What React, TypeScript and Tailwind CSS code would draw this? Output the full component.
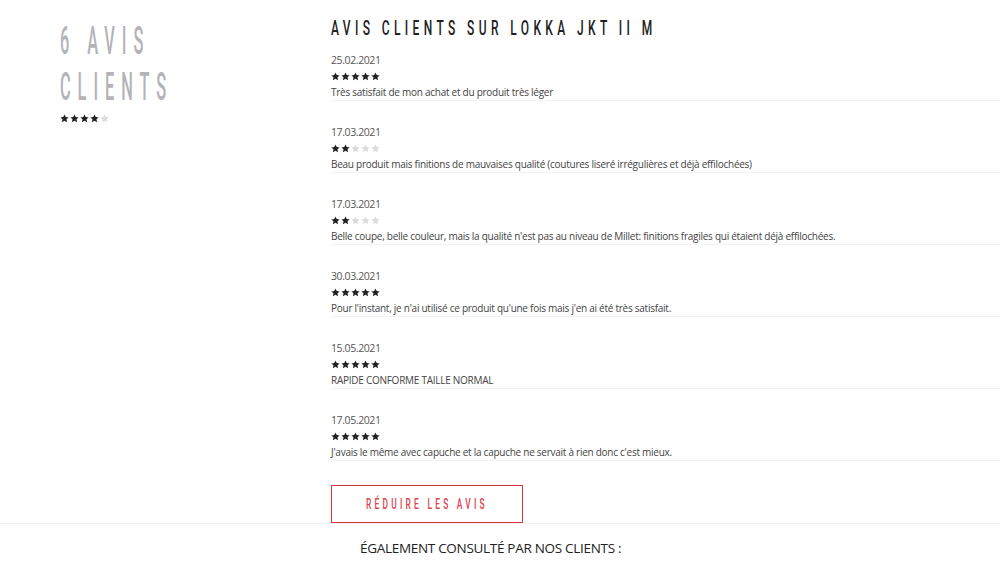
import React from "react";

const Star = ({ on }: { on: boolean }) => (
  <svg width="9" height="9" viewBox="0 0 24 24" className={on ? "text-[#222]" : "text-[#dcdcdc]"}>
    <path fill="currentColor" d="M12 1l3.3 7.1 7.7.9-5.7 5.2 1.6 7.7L12 18 5.1 21.9l1.6-7.7L1 9l7.7-.9z" />
  </svg>
);

const Stars = ({ n }: { n: number }) => (
  <div className="flex items-center gap-[1px] h-[16px]">
    {[0, 1, 2, 3, 4].map((i) => (
      <Star key={i} on={i < n} />
    ))}
  </div>
);

const reviews = [
  { date: "25.02.2021", n: 5, text: "Très satisfait de mon achat et du produit très léger" },
  { date: "17.03.2021", n: 2, text: "Beau produit mais finitions de mauvaises qualité (coutures liseré irrégulières et déjà effilochées)" },
  { date: "17.03.2021", n: 2, text: "Belle coupe, belle couleur, mais la qualité n'est pas au niveau de Millet: finitions fragiles qui étaient déjà effilochées." },
  { date: "30.03.2021", n: 5, text: "Pour l'instant, je n'ai utilisé ce produit qu'une fois mais j'en ai été très satisfait." },
  { date: "15.05.2021", n: 5, text: "RAPIDE CONFORME TAILLE NORMAL" },
  { date: "17.05.2021", n: 5, text: "J'avais le même avec capuche et la capuche ne servait à rien donc c'est mieux." },
];

export default function App() {
  return (
    <div className="w-[1000px] h-[564px] bg-white overflow-hidden font-['Open_Sans',sans-serif]">
      <div className="flex border-b border-[#f3f3f3]">
        <div className="w-[331px] shrink-0 pl-[60px] pt-[18px]">
          <div className="origin-left scale-x-[0.42] font-['Roboto',sans-serif] font-medium text-[39px] leading-[46px] tracking-[16.5px] text-[#b3b3b8] whitespace-nowrap">
            <div>6 AVIS</div>
            <div>CLIENTS</div>
          </div>
          <div className="mt-[0px]">
            <Stars n={4} />
          </div>
        </div>
        <div className="flex-1">
          <div className="h-[52px] pt-[16px]">
            <div className="origin-left scale-x-[0.6] font-['Roboto',sans-serif] font-medium text-[20px] leading-[24px] tracking-[7.3px] text-[#222] whitespace-nowrap">
              AVIS CLIENTS SUR LOKKA JKT II M
            </div>
          </div>
          {reviews.map((r, i) => (
            <div key={i} className={`border-b border-[#f3f3f3] ${i < reviews.length - 1 ? "mb-[23px]" : ""}`}>
              <div className="text-[10.5px] leading-[16px] text-[#555] tracking-[-0.4px]">{r.date}</div>
              <Stars n={r.n} />
              <div className="text-[10px] leading-[16px] text-[#444] tracking-[-0.26px]">{r.text}</div>
            </div>
          ))}
          <div className="mt-[24px] w-[192px] h-[38px] border border-solid border-[color:#d9323e] flex items-center">
            <div className="ml-[34px] origin-left scale-x-[0.6] font-['Roboto',sans-serif] font-medium text-[14px] tracking-[5.4px] text-[#e0404b] whitespace-nowrap">
              RÉDUIRE LES AVIS
            </div>
          </div>
        </div>
      </div>
      <div className="pl-[360px] pt-[15px] text-[13.5px] leading-[18px] text-[#222] tracking-[-0.3px]">
        ÉGALEMENT CONSULTÉ PAR NOS CLIENTS :
      </div>
    </div>
  );
}
